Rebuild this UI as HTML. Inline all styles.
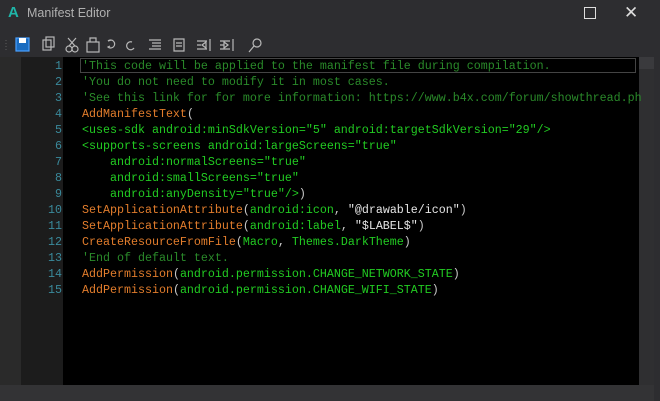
<!DOCTYPE html>
<html><head><style>
body{margin:0;width:660px;height:401px;background:#2d2d30;overflow:hidden;font-family:"Liberation Sans",sans-serif;position:relative}
.t{position:absolute;left:0;top:0;width:660px;height:28px;background:#2d2d30}
.ic{position:absolute;left:8px;top:4px;color:#1fb5a8;font-weight:bold;font-size:15px}
.ti{position:absolute;left:27px;top:6px;color:#b0b0b0;font-size:12.5px}
.ed{position:absolute;left:63px;top:57px;width:576px;height:328px;background:#000}
.lm{position:absolute;left:0;top:57px;width:21px;height:328px;background:#2a2a2a}
.gt{position:absolute;left:21px;top:57px;width:42px;height:328px;background:#1c1c1c}
.vs{position:absolute;left:639px;top:57px;width:15px;height:328px;background:#2f2f31}
.hs{position:absolute;left:0;top:385px;width:654px;height:16px;background:#333335}
pre{margin:0;font-family:"Liberation Mono",monospace;font-size:11.67px;line-height:16px;position:absolute;top:58px}
.n{left:21px;width:41px;text-align:right;color:#3a8a9c}
.c{left:82px;color:#22cc22;white-space:pre}
.cm{color:#2a8a2a}.k{color:#e27d2c}.p{color:#c8c8c8}.s{color:#e6e6e6}
.hl{position:absolute;left:80px;top:58px;width:556px;height:15px;border:1px solid #444;box-sizing:border-box}
</style></head><body>
<div class="t"><span class="ic">A</span><span class="ti">Manifest Editor</span>
<div style="position:absolute;left:584px;top:7px;width:10px;height:10px;border:1px solid #ddd"></div>
<div style="position:absolute;left:624px;top:3px;color:#ddd;font-size:17px">✕</div></div>
<svg style="position:absolute;left:0;top:34px" width="280" height="24">
<g fill="none" stroke="#b8b8b8" stroke-width="1.2">
<line x1="6" y1="6" x2="6" y2="18" stroke="#555" stroke-dasharray="1 2"/>
<rect x="16" y="4" width="13" height="13" fill="#1a6cc0" stroke="#4aa0ff"/>
<rect x="19" y="4" width="7" height="5" fill="#fff" stroke="none"/>
<rect x="43" y="6" width="8" height="10"/><rect x="46" y="3" width="8" height="10"/>
<circle cx="69" cy="15" r="3"/><circle cx="75" cy="15" r="3"/><path d="M68 4l7 8M76 4l-7 8"/>
<rect x="87" y="8" width="12" height="10"/><path d="M90 8V4h6v4"/>
<path d="M108 7a4 4 0 1 1 0 6l2 -1M111 6l-3 1"/><path d="M132 8a4 4 0 1 0 2 6"/>
<path d="M149 6h12M152 9h9M152 12h9M149 15h12"/>
<path d="M174 5h10v12h-10zM176 9h6M176 12h6"/>
<path d="M197 7h10M197 11h4M197 15h10M210 5v12M202 11l4-3v6z"/>
<path d="M220 7h10M220 11h4M220 15h10M233 5v12M228 11l-4-3v6z"/>
<circle cx="257" cy="9" r="4"/><path d="M254 12l-5 6"/>
</g></svg>
<div class="lm"></div><div class="gt"></div><div class="ed"></div>
<div class="vs"><div style="position:absolute;left:0;top:0;width:15px;height:12px;background:#3a3a3d"></div></div>
<div class="hs"></div>
<div class="hl"></div>
<pre class="n">1
2
3
4
5
6
7
8
9
10
11
12
13
14
15</pre>
<pre class="c"><span class="cm">'This code will be applied to the manifest file during compilation.</span>
<span class="cm">'You do not need to modify it in most cases.</span>
<span class="cm">'See this link for for more information: https://www.b4x.com/forum/showthread.ph</span>
<span class="k">AddManifestText</span><span class="p">(</span>
&lt;uses-sdk android:minSdkVersion="5" android:targetSdkVersion="29"/&gt;
&lt;supports-screens android:largeScreens="true"
    android:normalScreens="true"
    android:smallScreens="true"
    android:anyDensity="true"/&gt;<span class="p">)</span>
<span class="k">SetApplicationAttribute</span><span class="p">(</span>android:icon<span class="p">,</span> <span class="s">"@drawable/icon"</span><span class="p">)</span>
<span class="k">SetApplicationAttribute</span><span class="p">(</span>android:label<span class="p">,</span> <span class="s">"$LABEL$"</span><span class="p">)</span>
<span class="k">CreateResourceFromFile</span><span class="p">(</span>Macro<span class="p">,</span> Themes.DarkTheme<span class="p">)</span>
<span class="cm">'End of default text.</span>
<span class="k">AddPermission</span><span class="p">(</span>android.permission.CHANGE_NETWORK_STATE<span class="p">)</span>
<span class="k">AddPermission</span><span class="p">(</span>android.permission.CHANGE_WIFI_STATE<span class="p">)</span></pre>
</body></html>
